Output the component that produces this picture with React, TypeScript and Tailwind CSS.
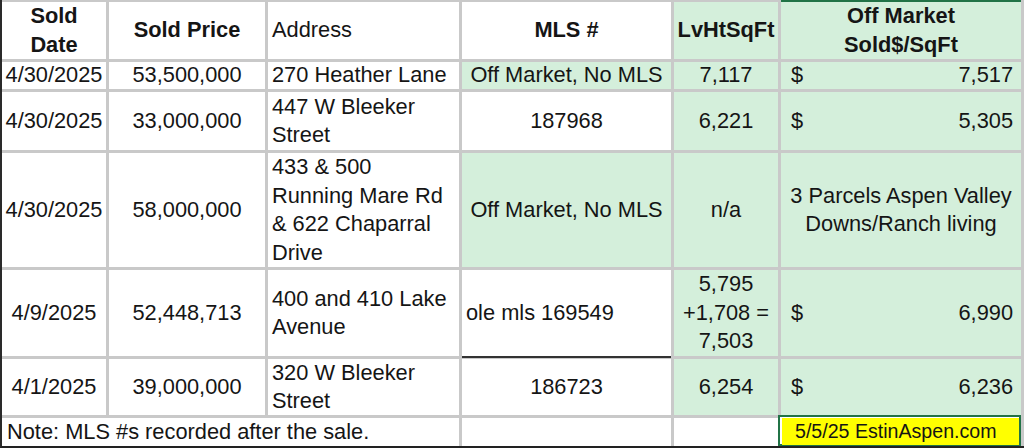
import { Fragment } from "react";

const font = { fontFamily: '"Liberation Sans", Arial, sans-serif' };

type Row = {
  date: string;
  price: string;
  address: string[];
  mls: string;
  mlsGreen: boolean;
  mlsLeft?: boolean;
  mlsUnderline?: boolean;
  sqft: string[];
  perSqFt?: string;
  note?: string[];
};

const rows: Row[] = [
  { date: "4/30/2025", price: "53,500,000", address: ["270 Heather Lane"], mls: "Off Market, No MLS", mlsGreen: true, sqft: ["7,117"], perSqFt: "7,517" },
  { date: "4/30/2025", price: "33,000,000", address: ["447 W Bleeker", "Street"], mls: "187968", mlsGreen: false, sqft: ["6,221"], perSqFt: "5,305" },
  {
    date: "4/30/2025",
    price: "58,000,000",
    address: ["433 & 500", "Running Mare Rd", "& 622 Chaparral", "Drive"],
    mls: "Off Market, No MLS",
    mlsGreen: true,
    sqft: ["n/a"],
    note: ["3 Parcels Aspen Valley", "Downs/Ranch living"],
  },
  {
    date: "4/9/2025",
    price: "52,448,713",
    address: ["400 and 410 Lake", "Avenue"],
    mls: "ole mls 169549",
    mlsGreen: false,
    mlsLeft: true,
    mlsUnderline: true,
    sqft: ["5,795", "+1,708 =", "7,503"],
    perSqFt: "6,990",
  },
  { date: "4/1/2025", price: "39,000,000", address: ["320 W Bleeker", "Street"], mls: "186723", mlsGreen: false, sqft: ["6,254"], perSqFt: "6,236" },
];

export default function App() {
  return (
    <div className="w-[1024px] h-[448px] bg-white overflow-hidden text-[#151515]" style={font}>
      <div className="grid grid-cols-[104px_156px_191px_209px_104px_240px] grid-rows-[57px_27px_58px_114px_86px_56px_28px] gap-[3px] bg-[#c9c9c9] pt-[2px] pr-[3px] border-l-2 border-l-[#2a2a2a] border-b-2 border-b-[#222] text-[21.8px] leading-[28.5px]">
        {/* Header */}
        <div className="bg-white flex flex-col items-center justify-center font-bold">
          <span>Sold</span>
          <span>Date</span>
        </div>
        <div className="bg-white flex items-center justify-center font-bold">Sold Price</div>
        <div className="bg-white flex items-center pl-[4px]">Address</div>
        <div className="bg-white flex items-center justify-center font-bold">MLS #</div>
        <div className="bg-[#d4efdb] flex items-center justify-center font-bold">LvHtSqFt</div>
        <div className="bg-[#d4efdb] flex flex-col items-center justify-center font-bold shadow-[0_-2px_0_#217346]">
          <span>Off Market</span>
          <span>Sold$/SqFt</span>
        </div>

        {rows.map((r, i) => (
          <Fragment key={i}>
            <div className="bg-white flex items-center justify-center">{r.date}</div>
            <div className="bg-white flex items-center justify-center">{r.price}</div>
            <div className="bg-white flex flex-col justify-center pl-[4px]">
              {r.address.map((l) => (
                <span key={l}>{l}</span>
              ))}
            </div>
            <div
              className={`flex items-center ${r.mlsGreen ? "bg-[#d4efdb]" : "bg-white"} ${r.mlsLeft ? "pl-[4px]" : "justify-center"} ${r.mlsUnderline ? "shadow-[0_2px_0_#333]" : ""}`}
            >
              {r.mls}
            </div>
            <div className="bg-[#d4efdb] flex flex-col items-center justify-center">
              {r.sqft.map((l) => (
                <span key={l}>{l}</span>
              ))}
            </div>
            {r.note ? (
              <div className="bg-[#d4efdb] flex flex-col items-center justify-center">
                {r.note.map((l) => (
                  <span key={l}>{l}</span>
                ))}
              </div>
            ) : (
              <div className="bg-[#d4efdb] flex items-center justify-between pl-[10px] pr-[8px]">
                <span>$</span>
                <span>{r.perSqFt}</span>
              </div>
            )}
          </Fragment>
        ))}

        {/* Footer */}
        <div className="col-span-3 bg-white flex items-center pl-[5px] whitespace-nowrap">
          Note: MLS #s recorded after the sale.
        </div>
        <div className="bg-white" />
        <div className="bg-white" />
        <div className="-ml-[3px] -mt-[3px] border-2 border-[#217346] bg-white">
          <div className="h-full bg-[#ffff00] ml-[2px] mt-[1px] flex items-center pl-[13px] text-[19.6px]">
            5/5/25 EstinAspen.com
          </div>
        </div>
      </div>
    </div>
  );
}
